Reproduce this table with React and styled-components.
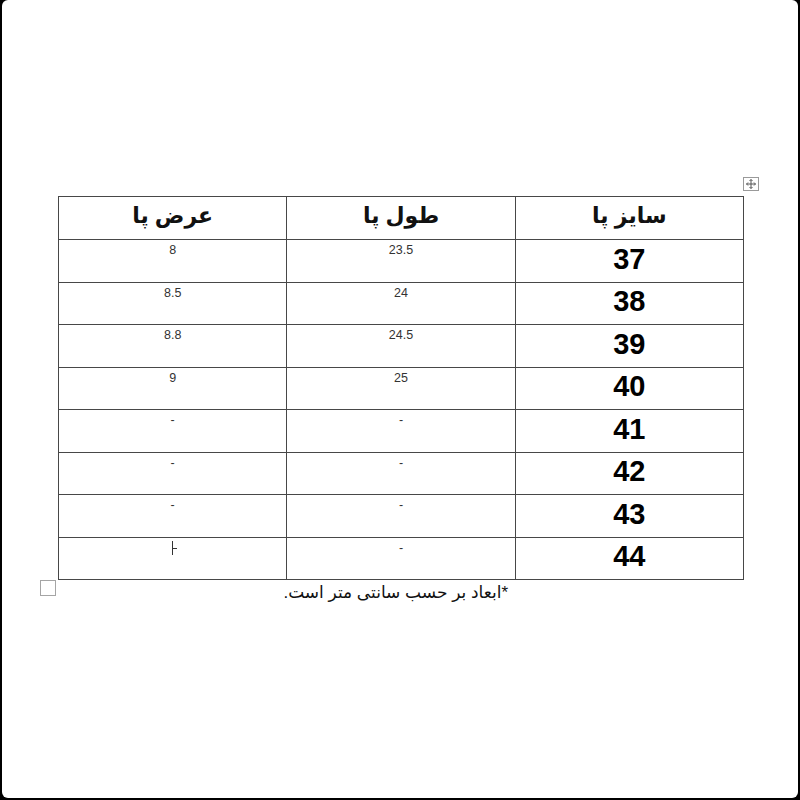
import React from "react";
import styled, { createGlobalStyle } from "styled-components";

const Global = createGlobalStyle`
  html, body { margin: 0; padding: 0; background: #000; }
  body { width: 800px; height: 800px; overflow: hidden; }
`;

const Frame = styled.div`
  box-sizing: border-box;
  width: 796px;
  height: 798px;
  margin-left: 2px;
  background: #fff;
  border-radius: 6px;
  padding: 196px 0 0 56px;
  font-family: "Liberation Sans", "DejaVu Sans", Arial, sans-serif;
  color: #111;
`;

const TableWrap = styled.div`
  position: relative;
  width: 686px;
`;

const MoveHandle = styled.div`
  position: absolute;
  right: -15px;
  top: -19px;
  width: 14px;
  height: 12px;
  border: 1px solid #9a9a9a;
  background: #fff;
  display: flex;
  align-items: center;
  justify-content: center;
`;

const CornerBox = styled.div`
  position: absolute;
  left: -18px;
  bottom: -16px;
  width: 14px;
  height: 14px;
  border: 1px solid #a5a5a5;
  background: #fff;
`;

const Table = styled.table`
  direction: rtl;
  width: 686px;
  border-collapse: collapse;
  table-layout: fixed;
`;

const Th = styled.th`
  box-sizing: border-box;
  border: 1px solid #474747;
  height: 43px;
  padding: 0 0 5px;
  font-size: 22px;
  line-height: 26px;
  font-weight: bold;
  text-align: center;
  vertical-align: middle;
`;

const Td = styled.td`
  box-sizing: border-box;
  border: 1px solid #474747;
  height: 42.5px;
  padding: 0;
  text-align: center;
  vertical-align: ${(p) => (p.$size ? "middle" : "top")};
  font-size: ${(p) => (p.$size ? "29px" : "12.5px")};
  font-weight: ${(p) => (p.$size ? "bold" : "normal")};
  padding-top: ${(p) => (p.$size ? "0" : "3px")};
  padding-bottom: ${(p) => (p.$size ? "4px" : "0")};
  color: ${(p) => (p.$size ? "#000" : "#333")};
  line-height: ${(p) => (p.$size ? "32px" : "15px")};
`;

const Caption = styled.div`
  direction: rtl;
  width: 450px;
  text-align: right;
  font-size: 17px;
  line-height: 20px;
  margin-top: 3px;
  color: #111;
`;

const Cursor = styled.span`
  display: inline-block;
  width: 1px;
  height: 14px;
  background: #333;
  position: relative;
  vertical-align: top;
  &::after {
    content: "";
    position: absolute;
    left: 1px;
    top: 7px;
    width: 4px;
    height: 1px;
    background: #333;
  }
`;

const rows = [
  ["37", "23.5", "8"],
  ["38", "24", "8.5"],
  ["39", "24.5", "8.8"],
  ["40", "25", "9"],
  ["41", "-", "-"],
  ["42", "-", "-"],
  ["43", "-", "-"],
  ["44", "-", "cursor"],
];

export default function App() {
  return (
    <>
      <Global />
      <Frame>
        <TableWrap>
          <MoveHandle>
            <svg width="10" height="10" viewBox="0 0 10 10" fill="none" stroke="#555" strokeWidth="1">
              <path d="M5 0.5V9.5M0.5 5H9.5" />
              <path d="M3.5 2L5 0.5L6.5 2M3.5 8L5 9.5L6.5 8M2 3.5L0.5 5L2 6.5M8 3.5L9.5 5L8 6.5" />
            </svg>
          </MoveHandle>
          <Table>
            <thead>
              <tr>
                <Th>سایز پا</Th>
                <Th>طول پا</Th>
                <Th>عرض پا</Th>
              </tr>
            </thead>
            <tbody>
              {rows.map((r) => (
                <tr key={r[0]}>
                  <Td $size>{r[0]}</Td>
                  <Td>{r[1]}</Td>
                  <Td>{r[2] === "cursor" ? <Cursor /> : r[2]}</Td>
                </tr>
              ))}
            </tbody>
          </Table>
          <CornerBox />
        </TableWrap>
        <Caption>*ابعاد بر حسب سانتی متر است.</Caption>
      </Frame>
    </>
  );
}
